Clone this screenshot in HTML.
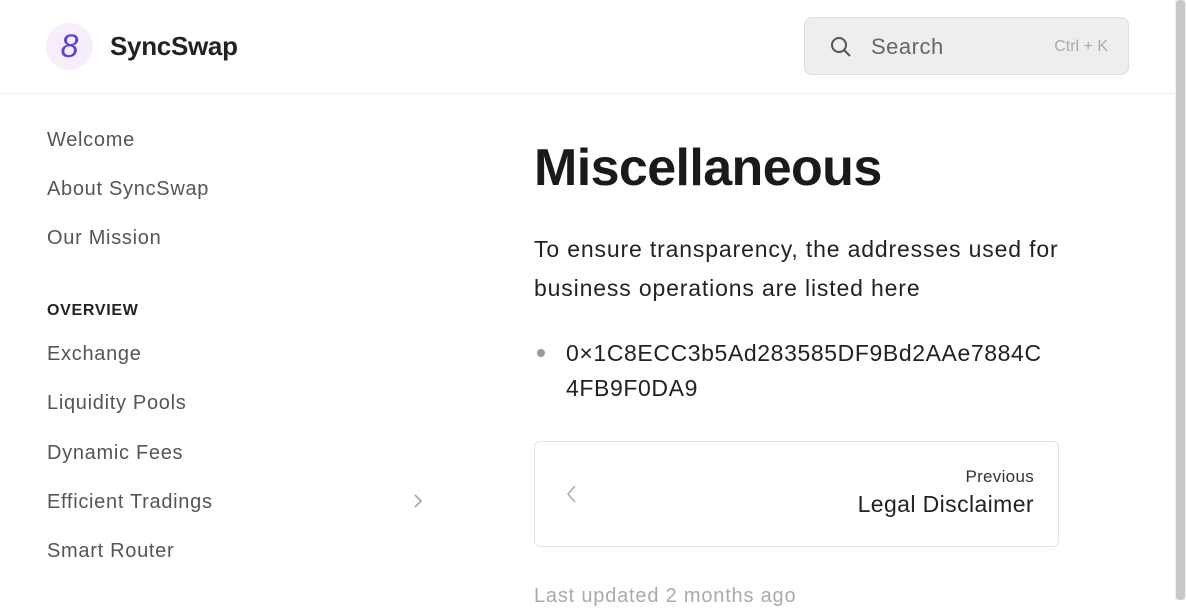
<!DOCTYPE html>
<html><head><style>
*{box-sizing:border-box;margin:0;padding:0}
body{width:1186px;height:600px;overflow:hidden;background:#fff;font-family:"Liberation Sans",sans-serif;position:relative}
.hdr{position:absolute;left:0;top:0;width:1175px;height:94px;border-bottom:1px solid #eee}
.logo{position:absolute;left:46px;top:23px;width:47px;height:47px;border-radius:50%;background:radial-gradient(circle,#f3ecff,#fbeef7);color:#5b3fd6;font-style:italic;font-size:32px;text-align:center;line-height:47px}
.brand{position:absolute;left:110px;top:31px;font-size:26px;font-weight:bold;color:#222;letter-spacing:-0.3px}
.search{position:absolute;left:804px;top:17px;width:325px;height:58px;border:1px solid #ddd;border-radius:8px;background:#eeeeee}
.search span.t{position:absolute;left:66px;top:16px;font-size:22px;color:#666;letter-spacing:0.5px}
.search span.k{position:absolute;right:20px;top:20px;font-size:16px;color:#aaa}
.nav a{position:absolute;left:47px;font-size:20px;color:#555;letter-spacing:0.7px}
.nav .h{font-size:16px;font-weight:bold;color:#222;letter-spacing:0.7px}
h1{position:absolute;left:534px;top:138px;font-size:52px;font-weight:bold;color:#1a1a1a;letter-spacing:-0.6px}
p.i{position:absolute;left:534px;top:230px;width:560px;font-size:23px;line-height:39px;color:#222;letter-spacing:0.85px}
.li{position:absolute;left:566px;top:336px;font-size:23px;line-height:35px;color:#222;letter-spacing:0.6px}
.dot{position:absolute;left:537px;top:349px;width:8px;height:8px;border-radius:50%;background:#999}
.card{position:absolute;left:534px;top:441px;width:525px;height:106px;border:1px solid #e3e3e3;border-radius:6px}
.card .p{position:absolute;right:24px;top:25px;font-size:17px;color:#333;letter-spacing:0.3px}
.card .l{position:absolute;right:24px;top:49px;font-size:23px;color:#222;letter-spacing:0.4px}
.upd{position:absolute;left:534px;top:585px;font-size:20px;color:#aaa;letter-spacing:0.8px}
.sb{position:absolute;left:1175px;top:0;width:11px;height:600px;background:#f1f1f1}
.sb div{position:absolute;left:1px;top:0;width:9px;height:600px;background:#c8c8c8;border-radius:4px}
</style></head><body>
<div class="hdr">
<div class="logo">8</div>
<div class="brand">SyncSwap</div>
<div class="search">
<svg style="position:absolute;left:24px;top:17px" width="24" height="24" viewBox="0 0 24 24" fill="none" stroke="#555" stroke-width="2"><circle cx="10" cy="10" r="7"/><path d="M15 15l6 6"/></svg>
<span class="t">Search</span><span class="k">Ctrl + K</span></div>
</div>
<div class="nav">
<a style="top:129px">Welcome</a>
<a style="top:178px">About SyncSwap</a>
<a style="top:227px">Our Mission</a>
<a class="h" style="top:302px">OVERVIEW</a>
<a style="top:343px">Exchange</a>
<a style="top:392px">Liquidity Pools</a>
<a style="top:442px">Dynamic Fees</a>
<a style="top:491px">Efficient Tradings</a>
<a style="top:540px">Smart Router</a>
</div>
<svg style="position:absolute;left:412px;top:493px" width="12" height="16" viewBox="0 0 12 16" fill="none" stroke="#999" stroke-width="1.5"><path d="M3 2l6 6-6 6"/></svg>
<h1>Miscellaneous</h1>
<p class="i">To ensure transparency, the addresses used for<br>business operations are listed here</p>
<div class="dot"></div>
<div class="li">0×1C8ECC3b5Ad283585DF9Bd2AAe7884C<br>4FB9F0DA9</div>
<div class="card">
<svg style="position:absolute;left:30px;top:42px" width="14" height="20" viewBox="0 0 14 20" fill="none" stroke="#aaa" stroke-width="1.5"><path d="M10 2l-7 8 7 8"/></svg>
<div class="p">Previous</div><div class="l">Legal Disclaimer</div></div>
<div class="upd">Last updated 2 months ago</div>
<div class="sb"><div></div></div>
</body></html>
